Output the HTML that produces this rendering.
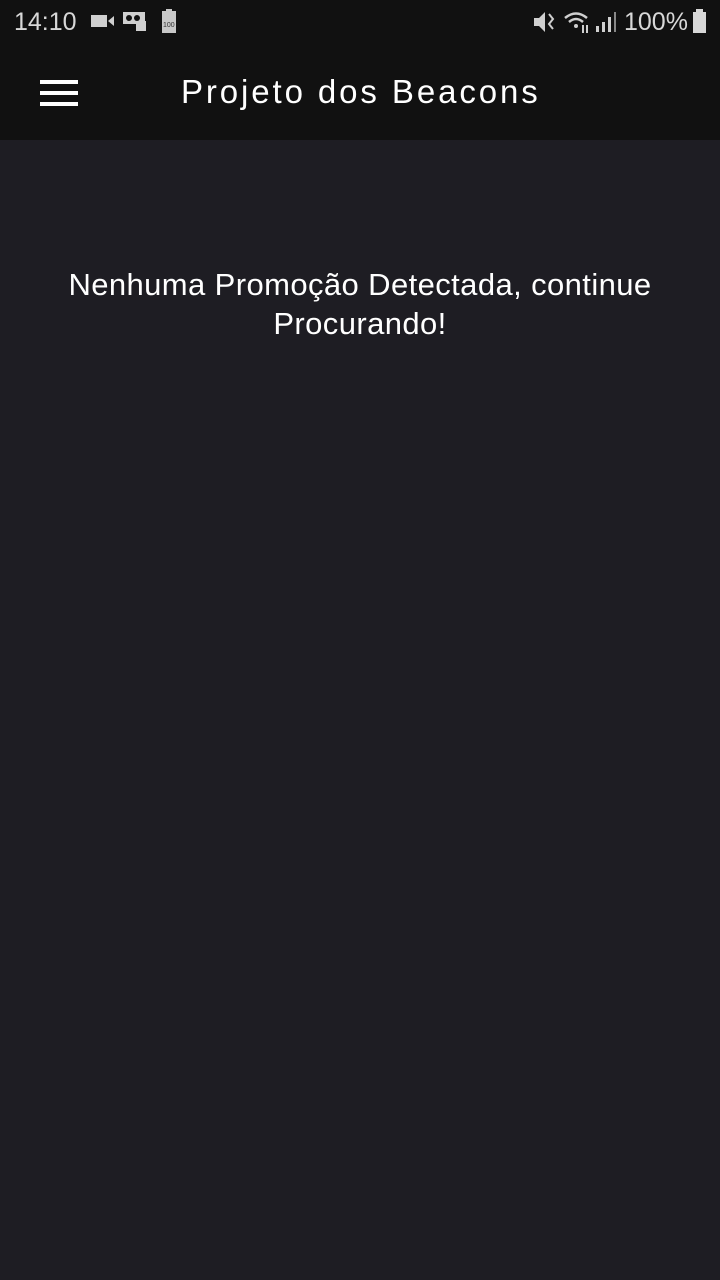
<!DOCTYPE html>
<html><head><meta charset="utf-8"><style>
html,body{margin:0;padding:0;width:720px;height:1280px;overflow:hidden;background:#1e1d23;font-family:"Liberation Sans",sans-serif;}
.sb{position:absolute;left:0;top:0;width:720px;height:46px;background:#111111;color:#d8d8d8;}
.hd{position:absolute;left:0;top:46px;width:720px;height:94px;background:#111111;}
.t{position:absolute;font-size:26px;}
</style></head><body>
<div class="sb">
 <div class="t" style="left:14px;top:8px;font-size:25px;">14:10</div>
 <svg style="position:absolute;left:90px;top:13px" width="26" height="16"><rect x="1" y="2" width="16" height="12" fill="#d0d0d0"/><polygon points="18,8 24,3 24,13" fill="#d0d0d0"/></svg>
 <svg style="position:absolute;left:122px;top:10px" width="26" height="22"><rect x="1" y="2" width="22" height="12" fill="#d0d0d0"/><rect x="14" y="11" width="10" height="10" fill="#d0d0d0"/><circle cx="7" cy="8" r="3" fill="#111"/><circle cx="15" cy="8" r="3" fill="#111"/></svg>
 <svg style="position:absolute;left:160px;top:9px" width="18" height="26"><rect x="2" y="2" width="14" height="22" fill="#c8c8c8"/><rect x="6" y="0" width="6" height="3" fill="#c8c8c8"/><text x="3" y="18" font-size="7" fill="#333" font-family="Liberation Sans">100</text></svg>
 <svg style="position:absolute;left:532px;top:10px" width="26" height="24"><polygon points="2,8 7,8 13,2 13,22 7,16 2,16" fill="#d0d0d0"/><path d="M17 4 L21 9 L17 14 L21 19" stroke="#d0d0d0" stroke-width="2" fill="none"/></svg>
 <svg style="position:absolute;left:563px;top:9px" width="30" height="26"><path d="M2 9 Q13 0 24 9" stroke="#d0d0d0" stroke-width="2.5" fill="none"/><path d="M6 13 Q13 7 20 13" stroke="#d0d0d0" stroke-width="2.5" fill="none"/><circle cx="13" cy="17" r="2" fill="#d0d0d0"/><path d="M20 16v8M24 16v8" stroke="#d0d0d0" stroke-width="2"/></svg>
 <svg style="position:absolute;left:594px;top:10px" width="24" height="24"><rect x="2" y="16" width="3" height="6" fill="#d0d0d0"/><rect x="8" y="12" width="3" height="10" fill="#d0d0d0"/><rect x="14" y="7" width="3" height="15" fill="#d0d0d0"/><rect x="20" y="2" width="2" height="20" fill="#888"/></svg>
 <div class="t" style="left:624px;top:8px;font-size:25px;">100%</div>
 <svg style="position:absolute;left:692px;top:9px" width="16" height="26"><rect x="1" y="3" width="13" height="21" fill="#d8d8d8"/><rect x="4" y="0" width="7" height="4" fill="#d8d8d8"/></svg>
</div>
<div class="hd">
 <div style="position:absolute;left:40px;top:34px;width:38px;height:4px;background:#fff"></div>
 <div style="position:absolute;left:40px;top:45px;width:38px;height:4px;background:#fff"></div>
 <div style="position:absolute;left:40px;top:56px;width:38px;height:4px;background:#fff"></div>
 <div style="position:absolute;left:181px;top:27px;font-size:33px;color:#fff;letter-spacing:2.9px;">Projeto dos Beacons</div>
</div>
<div style="position:absolute;left:0;top:265px;width:720px;text-align:center;color:#fff;font-size:31px;line-height:39px;letter-spacing:0.4px;">Nenhuma Promoção Detectada, continue<br>Procurando!</div>
</body></html>
